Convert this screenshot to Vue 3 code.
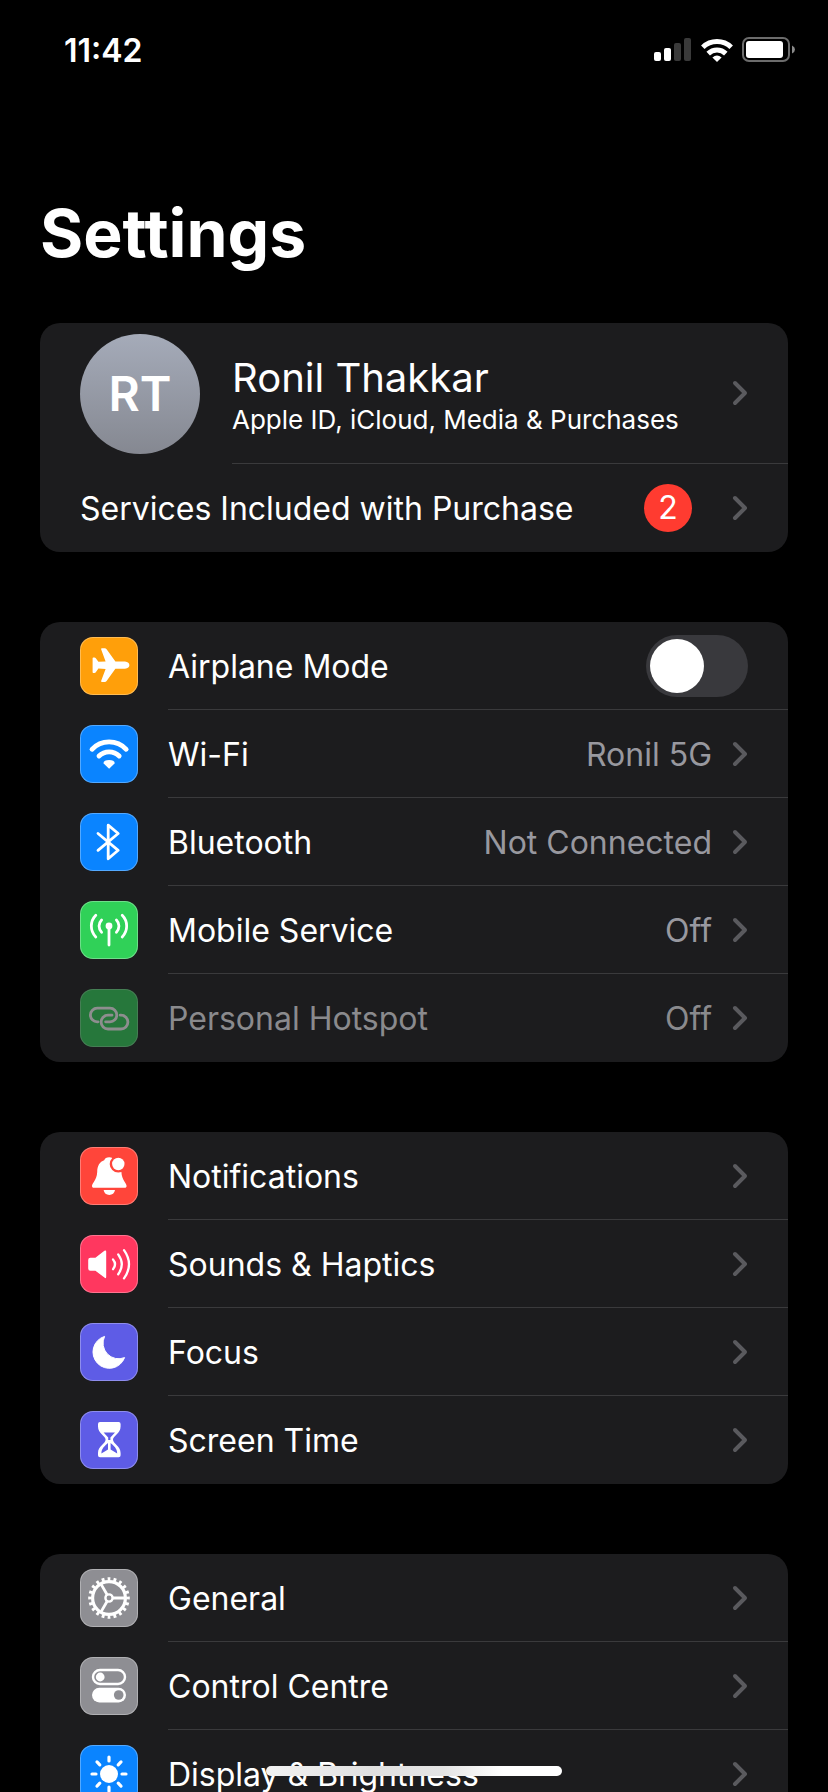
<script setup>
import { ref } from "vue";

const airplaneMode = ref(false);

const groups = [
  {
    name: "Connectivity",
    rows: [
      { icon: "airplane", color: "orange", label: "Airplane Mode", toggle: true },
      { icon: "wifi", color: "blue", label: "Wi-Fi", value: "Ronil 5G" },
      { icon: "bluetooth", color: "blue", label: "Bluetooth", value: "Not Connected" },
      { icon: "mobile", color: "green", label: "Mobile Service", value: "Off" },
      { icon: "hotspot", color: "green", label: "Personal Hotspot", value: "Off", disabled: true },
    ],
  },
  {
    name: "Alerts",
    rows: [
      { icon: "bell", color: "red", label: "Notifications" },
      { icon: "speaker", color: "pink", label: "Sounds & Haptics" },
      { icon: "moon", color: "indigo", label: "Focus" },
      { icon: "hourglass", color: "indigo", label: "Screen Time" },
    ],
  },
  {
    name: "Device",
    rows: [
      { icon: "gear", color: "gray", label: "General" },
      { icon: "switches", color: "gray", label: "Control Centre" },
      { icon: "sun", color: "blue", label: "Display & Brightness" },
    ],
  },
];

const rays = [0, 45, 90, 135, 180, 225, 270, 315];
</script>

<template>
  <main class="phone">
    <header class="status-bar">
      <time class="clock">11:42</time>

      <div class="status-icons">
        <svg class="signal" viewBox="0 0 38 24" aria-hidden="true">
          <rect x="0" y="14" width="7" height="9" rx="2" fill="#fff" />
          <rect x="10" y="10" width="7" height="13" rx="2" fill="#fff" />
          <rect x="20" y="5" width="7" height="18" rx="2" fill="#3a3a3a" />
          <rect x="30" y="0" width="7" height="23" rx="2" fill="#3a3a3a" />
        </svg>
        <svg class="wifi" viewBox="0 0 32 24" aria-hidden="true">
          <g fill="none" stroke="#fff" stroke-width="5">
            <path d="M1.8 9.2A20.5 20.5 0 0 1 30.2 9.2" />
            <path d="M7.2 15.6A12.6 12.6 0 0 1 24.8 15.6" />
          </g>
          <path d="M16 24L11.4 19.4Q16 15.8 20.6 19.4Z" fill="#fff" />
        </svg>
        <svg class="battery" viewBox="0 0 54 26" aria-hidden="true">
          <rect x="1" y="1" width="46" height="23" rx="6" fill="none" stroke="#6c6c6c" stroke-width="2" />
          <rect x="4" y="4" width="37" height="17" rx="3" fill="#fff" />
          <path d="M50 8.5Q53 9.8 53 12.5T50 16.5Z" fill="#8a8a8a" />
        </svg>
      </div>
    </header>

    <div class="scroll">
      <h1 class="title">Settings</h1>

      <section class="group" aria-label="Account">
        <a class="row profile" href="#account">
          <span class="avatar">RT</span>
          <span class="row-body">
            <span class="profile-text">
              <span class="name">Ronil Thakkar</span>
              <span class="subtitle">Apple ID, iCloud, Media &amp; Purchases</span>
            </span>
            <svg class="chevron" viewBox="0 0 16 26"><path d="M3 3L13 13L3 23" /></svg>
          </span>
        </a>
        <a class="row" href="#services">
          <span class="row-body">
            <span class="label">Services Included with Purchase</span>
            <span class="badge">2</span>
            <svg class="chevron" viewBox="0 0 16 26"><path d="M3 3L13 13L3 23" /></svg>
          </span>
        </a>
      </section>

      <section v-for="group in groups" :key="group.name" class="group" :aria-label="group.name">
        <component
          :is="row.toggle ? 'label' : 'a'"
          v-for="row in group.rows"
          :key="row.icon"
          class="row"
          :class="{ 'row--disabled': row.disabled }"
          :href="row.toggle ? undefined : `#${row.icon}`"
          :aria-disabled="row.disabled"
        >
          <svg class="icon" :class="`icon--${row.color}`" viewBox="0 0 58 58" aria-hidden="true">
            <path
              v-if="row.icon === 'airplane'"
              fill="#fff"
              d="M45 24.6Q49.4 25.3 49.4 28.2T45 31.8H35.4L26.6 44Q25.8 45 24.8 45H22Q20.8 45 21.2 43.8L25.6 31.9L18.4 31.6L15.8 35.2Q15.3 36 14.4 36H13.4Q12.6 36 12.6 35.2V21.2Q12.6 20.4 13.4 20.4H14.4Q15.3 20.4 15.8 21.2L18.4 24.8L25.6 24.5L21.2 12.4Q20.8 11.2 22 11.2H24.8Q25.8 11.2 26.6 12.2L35.4 24.6Z"
            />

            <g v-else-if="row.icon === 'wifi'">
              <g fill="none" stroke="#fff" stroke-width="4.8" stroke-linecap="round">
                <path d="M12 24.3A23.4 23.4 0 0 1 46.2 24.3" />
                <path d="M19 31A14.2 14.2 0 0 1 39.2 31" />
              </g>
              <path d="M29.1 43.8L23.4 38.2Q23.8 35 29.1 35T34.8 38.2Z" fill="#fff" />
            </g>

            <path
              v-else-if="row.icon === 'bluetooth'"
              class="line"
              stroke-width="2.8"
              d="M18 20.5L38.2 37.3L28.2 45.8V12.2L38.2 20.5L18 37.3"
            />

            <g v-else-if="row.icon === 'mobile'">
              <g class="line" stroke-width="2.8">
                <path d="M29 25V44" />
                <path d="M15.8 14.2A15.5 15.5 0 0 0 15.8 36" />
                <path d="M42.2 14.2A15.5 15.5 0 0 1 42.2 36" />
                <path d="M21.6 19A8.6 8.6 0 0 0 21.6 31.2" />
                <path d="M36.4 19A8.6 8.6 0 0 1 36.4 31.2" />
              </g>
              <circle cx="29" cy="25" r="3.4" fill="#fff" />
            </g>

            <g v-else-if="row.icon === 'hotspot'" class="line" stroke-width="2.8">
              <path d="M18 32.8H17.2A6.8 6.8 0 0 1 17.2 19.2H30A6.8 6.8 0 0 1 30 32.8H25.6" />
              <path d="M40.2 26.2H41A6.9 6.9 0 0 1 41 40H28A6.9 6.9 0 0 1 28 26.2H32" />
            </g>

            <g v-else-if="row.icon === 'bell'">
              <path
                fill="#fff"
                d="M29.2 10.3C31.8 10.3 33.6 11.4 34.2 13.2C38.6 14.6 41.4 18.8 41.4 25C41.8 33.4 46.6 36 46.6 39C46.6 40.2 45.8 40.8 44.8 40.8H13.8C12.6 40.8 12 40.2 12 39C12 36 16.8 33.4 17.2 25C17.2 18.8 19.8 14.6 24.2 13.2C24.8 11.4 26.6 10.3 29.2 10.3Z"
              />
              <path d="M23.6 43H35Q34 47.9 29.3 47.9T23.6 43Z" fill="#fff" />
              <circle cx="38.3" cy="17" r="8.6" fill="#ff453a" />
              <circle cx="38.3" cy="17" r="6.2" fill="#fff" />
            </g>

            <g v-else-if="row.icon === 'speaker'">
              <path
                fill="#fff"
                d="M10.4 22.8H15.4L24.4 15.8Q26.2 14.6 26.2 16.8V41.8Q26.2 44 24.4 42.6L15.4 35.8H10.4Q8.2 35.8 8.2 33.6V25Q8.2 22.8 10.4 22.8Z"
              />
              <g class="line" stroke-width="2.3">
                <path d="M33 24.4Q37.2 29.3 33 34.2" />
                <path d="M38.2 19.4Q45.4 29.3 38.2 39.2" />
                <path d="M44 15.2Q54 29.3 44 43.4" />
              </g>
            </g>

            <path
              v-else-if="row.icon === 'moon'"
              fill="#fff"
              stroke="#fff"
              stroke-linejoin="round"
              d="M24.6 13.4A16.3 16.3 0 1 0 44.6 34.6A15.6 15.6 0 0 1 24.6 13.4Z"
            />

            <g v-else-if="row.icon === 'hourglass'">
              <path
                fill="#fff"
                d="M20 11H38.6Q40.6 11 40.6 13V15.5C40.6 22.5 33 25 33 28.7C33 32.4 40.6 35 40.6 42V44.3Q40.6 46.3 38.6 46.3H20Q18 46.3 18 44.3V42C18 35 25.6 32.4 25.6 28.7C25.6 25 18 22.5 18 15.5V13Q18 11 20 11Z"
              />
              <g fill="#5e5ce6">
                <path d="M23.6 21.4H35L30.4 26.4V29H28.2V26.4Z" />
                <path d="M28 32V38.4L21.4 42.4C21.4 37.6 25 34.6 28 32Z" />
                <path d="M30.6 32V38.4L37.2 42.4C37.2 37.6 33.6 34.6 30.6 32Z" />
              </g>
            </g>

            <g v-else-if="row.icon === 'gear'" fill="none" stroke="#fff">
              <circle cx="29" cy="29" r="16.4" stroke-width="3.2" />
              <circle cx="29" cy="29" r="19" stroke-width="3.6" pathLength="60" stroke-dasharray="1.4 1.6" stroke-dashoffset="0.7" />
              <circle cx="29" cy="29" r="3.6" stroke-width="2.4" />
              <g stroke-width="2.8">
                <path d="M33 29H45" />
                <path d="M33 29H45" transform="rotate(120 29 29)" />
                <path d="M33 29H45" transform="rotate(240 29 29)" />
              </g>
            </g>

            <g v-else-if="row.icon === 'switches'">
              <rect x="13" y="13" width="32" height="14" rx="7" fill="none" stroke="#fff" stroke-width="2.4" />
              <circle cx="20.2" cy="20" r="4.4" fill="#fff" />
              <rect x="12" y="30.8" width="34" height="14.6" rx="7.3" fill="#fff" />
              <circle cx="38.7" cy="38" r="4.8" fill="#8e8e93" />
            </g>

            <g v-else-if="row.icon === 'sun'">
              <circle cx="29" cy="29" r="9" fill="#fff" />
              <g class="line" stroke-width="3.2">
                <path v-for="angle in rays" :key="angle" d="M29 16V12" :transform="`rotate(${angle} 29 29)`" />
              </g>
            </g>
          </svg>

          <span class="row-body">
            <span class="label">{{ row.label }}</span>
            <input v-if="row.toggle" v-model="airplaneMode" class="toggle" type="checkbox" role="switch" />
            <template v-else>
              <span v-if="row.value" class="value">{{ row.value }}</span>
              <svg class="chevron" viewBox="0 0 16 26"><path d="M3 3L13 13L3 23" /></svg>
            </template>
          </span>
        </component>
      </section>
    </div>

    <div class="home-indicator"></div>
  </main>
</template>

<style>
body {
  background: #000;
}
</style>

<style scoped>
.phone {
  position: relative;
  display: flex;
  flex-direction: column;
  height: 100vh;
  overflow: hidden;
  background: #000;
  color: #fff;
  font-family: Inter, "Liberation Sans", sans-serif;
  font-size: 32px;
}

.status-bar {
  display: flex;
  flex-shrink: 0;
  align-items: center;
  justify-content: space-between;
  height: 100px;
  padding: 0 32px 0 64px;
}

.clock {
  font-weight: 600;
}

.status-icons {
  display: flex;
  align-items: center;
  gap: 9px;
}

.signal {
  width: 38px;
  height: 24px;
}

.wifi {
  width: 32px;
  height: 24px;
}

.battery {
  width: 54px;
  height: 26px;
}

.scroll {
  flex: 1;
  min-height: 0;
  padding: 93px 40px 0;
  overflow-y: auto;
  scrollbar-width: none;
}

.title {
  margin: 0 0 50px;
  font-size: 66px;
  font-weight: 700;
  line-height: 80px;
}

.group {
  margin-bottom: 70px;
  border-radius: 20px;
  background: #1c1c1e;
  overflow: hidden;
}

.row {
  display: flex;
  align-items: center;
  gap: 30px;
  min-height: 88px;
  padding-left: 40px;
  color: inherit;
  text-decoration: none;
}

.row-body {
  display: flex;
  flex: 1;
  align-items: center;
  align-self: stretch;
  gap: 20px;
  padding-right: 40px;
  border-bottom: 1px solid #3a3a3c;
}

.row:last-child .row-body {
  border-bottom-color: transparent;
}

.label,
.value {
  padding-top: 2px;
}

.label {
  flex: 1;
}

.value {
  color: #98989f;
}

.row--disabled .label,
.row--disabled .value {
  color: #8a8a8d;
}

.row--disabled .icon {
  opacity: 0.5;
}

.profile {
  gap: 32px;
  min-height: 141px;
}

.avatar {
  display: flex;
  align-items: center;
  justify-content: center;
  width: 120px;
  height: 120px;
  border-radius: 50%;
  background: linear-gradient(#a5abb9, #858891);
  font-size: 48px;
  font-weight: 600;
}

.profile-text {
  display: flex;
  flex: 1;
  flex-direction: column;
  padding-top: 6px;
}

.name {
  font-size: 40px;
  line-height: 48px;
}

.subtitle {
  font-size: 26px;
  line-height: 36px;
}

.badge {
  display: flex;
  align-items: center;
  justify-content: center;
  width: 48px;
  height: 48px;
  margin-right: 20px;
  border-radius: 50%;
  background: #ff3b30;
}

.chevron {
  width: 16px;
  height: 26px;
  fill: none;
  stroke: #5a5a5e;
  stroke-width: 4;
  stroke-linecap: round;
  stroke-linejoin: round;
}

.icon {
  width: 58px;
  height: 58px;
  border-radius: 13px;
  box-shadow: inset 0 0 0 1px rgba(255, 255, 255, 0.3);
}

.icon--orange { background: #ff9f0a; }
.icon--blue { background: #0a84ff; }
.icon--green { background: #30d158; }
.icon--red { background: #ff453a; }
.icon--pink { background: #ff375f; }
.icon--indigo { background: #5e5ce6; }
.icon--gray { background: #8e8e93; }

.line {
  fill: none;
  stroke: #fff;
  stroke-linecap: round;
  stroke-linejoin: round;
}

.toggle {
  width: 102px;
  height: 62px;
  margin: 0;
  padding: 4px;
  border-radius: 31px;
  background: #39393d;
  appearance: none;
  cursor: pointer;
}

.toggle::before {
  content: "";
  display: block;
  width: 54px;
  height: 54px;
  border-radius: 50%;
  background: #fff;
}

.toggle:checked {
  background: #30d158;
}

.toggle:checked::before {
  margin-left: auto;
}

.home-indicator {
  position: absolute;
  bottom: 16px;
  left: 50%;
  width: 296px;
  height: 10px;
  margin-left: -148px;
  border-radius: 5px;
  background: linear-gradient(90deg, #f2f2f2, #e0e0e0 35%, #e4e4e4 60%, #fff 80%);
}
</style>
